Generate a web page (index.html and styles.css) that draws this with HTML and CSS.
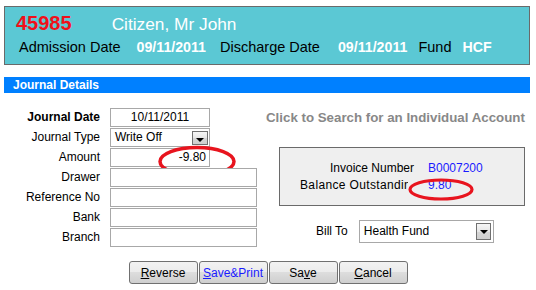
FILE: index.html
```html
<!DOCTYPE html>
<html>
<head>
<meta charset="utf-8">
<link rel="stylesheet" href="styles.css">
</head>
<body>
<div class="page">
  <div class="header">
    <div class="hrow1"><span class="mrn">45985</span><span class="pname">Citizen, Mr John</span></div>
    <div class="hrow2">
      <span class="hl">Admission Date</span><span class="hv">09/11/2011</span>
      <span class="hl">Discharge Date</span><span class="hv">09/11/2011</span>
      <span class="hl">Fund</span><span class="hv">HCF</span>
    </div>
  </div>
  <div class="bar">Journal Details</div>
  <div class="main">
    <div class="form">
      <div class="lbl bold">Journal Date</div>
      <div class="field w100 center">10/11/2011</div>
      <div class="lbl">Journal Type</div>
      <div class="field w100 select"><span>Write Off</span><span class="arrow small"></span></div>
      <div class="lbl">Amount</div>
      <div class="field w100 right amount">-9.80<svg class="oval oval-amt" width="80" height="33" viewBox="0 0 80 33"><ellipse cx="40" cy="16.5" rx="37" ry="14" fill="none" stroke="#e8141e" stroke-width="3.5"/></svg></div>
      <div class="lbl">Drawer</div>
      <div class="field"></div>
      <div class="lbl">Reference No</div>
      <div class="field"></div>
      <div class="lbl">Bank</div>
      <div class="field"></div>
      <div class="lbl">Branch</div>
      <div class="field"></div>
    </div>
    <div class="side">
      <div class="search">Click to Search for an Individual Account</div>
      <div class="invbox">
        <div class="ilbl">Invoice Number</div>
        <div class="ival">B0007200</div>
        <div class="ilbl bal-lbl"><span class="clip">Balance Outstanding</span></div>
        <div class="ival bal">9.80<svg class="oval oval-bal" width="68" height="25" viewBox="0 0 68 25"><ellipse cx="34" cy="12.5" rx="31" ry="9.5" fill="none" stroke="#e8141e" stroke-width="3.2"/></svg></div>
      </div>
      <div class="billto">
        <span class="billlbl">Bill To</span>
        <div class="field select big"><span>Health Fund</span><span class="arrow"></span></div>
      </div>
    </div>
  </div>
  <div class="buttons">
    <button class="btn"><u>R</u>everse</button>
    <button class="btn link"><u>S</u>ave&amp;Print</button>
    <button class="btn">Sa<u>v</u>e</button>
    <button class="btn"><u>C</u>ancel</button>
  </div>
</div>
</body>
</html>
```
FILE: styles.css
```css
* { box-sizing: border-box; }
html, body { margin: 0; padding: 0; background: #fff; }
body { font-family: "Liberation Sans", Arial, sans-serif; font-size: 12px; color: #000; }
.page { width: 536px; height: 290px; padding-top: 6px; overflow: hidden; }

.header {
  margin: 0 6px 0 4px;
  height: 59px;
  border: 1px solid #6a6a6a;
  background: #5bc8d4;
  padding: 4px 0 0 11px;
}
.hrow1 { display: flex; align-items: baseline; height: 24px; line-height: 24px; }
.mrn { color: #f0101a; font-weight: bold; font-size: 20px; }
.pname { color: #fff; font-size: 17.3px; margin-left: 40px; }
.hrow2 { display: flex; align-items: baseline; margin-top: 3px; line-height: 18px; padding-left: 3px; }
.hl { font-size: 14.5px; color: #000; }
.hv { font-size: 14.2px; font-weight: bold; color: #fff; }
.hrow2 .hl { margin-right: 16px; }
.hrow2 .hv { margin-right: 14px; }
.hrow2 .hl:nth-child(3) { margin-right: 18px; }
.hrow2 .hv:nth-child(4) { margin-right: 11px; }
.hrow2 .hl:nth-child(5) { margin-right: 11px; }

.bar {
  margin: 12px 6px 0 4px;
  height: 16px;
  line-height: 16px;
  background: #0080ff;
  color: #fff;
  font-weight: bold;
  font-size: 12px;
  padding-left: 9px;
}

.main { display: flex; align-items: flex-start; margin-top: 15px; }
.form {
  display: grid;
  grid-template-columns: 100px 147px;
  grid-auto-rows: 19px;
  column-gap: 10px;
  row-gap: 1px;
}
.lbl { text-align: right; line-height: 19px; white-space: nowrap; }
.bold { font-weight: bold; }
.field {
  position: relative;
  border: 1px solid #a8a8a8;
  background: #fff;
  height: 19px;
  line-height: 17px;
  padding: 0 4px;
  white-space: nowrap;
}
.w100 { width: 100px; }
.center { text-align: center; }
.right { text-align: right; padding-right: 3px; }
.select { display: flex; align-items: center; justify-content: space-between; padding-right: 1px; }
.arrow {
  position: relative;
  width: 15px;
  height: 17px;
  border: 1px solid #707070;
  background: linear-gradient(#f6f6f6, #e6e6e6 50%, #d6d6d6 50%, #cfcfcf);
}
.arrow.small { width: 16px; height: 14px; margin-top: 1px; }
.arrow::after {
  content: "";
  position: absolute;
  left: 3px;
  top: 6px;
  border-left: 4px solid transparent;
  border-right: 4px solid transparent;
  border-top: 4px solid #000;
}
.arrow.small::after { left: 3px; top: 6px; }
.oval { position: absolute; pointer-events: none; overflow: visible; }
.oval-amt { left: 46px; top: -4px; }

.side { width: 259px; margin-left: 9px; }
.search { color: #888; font-weight: bold; font-size: 13.3px; line-height: 19px; white-space: nowrap; }
.invbox {
  margin: 20px 0 0 13px;
  height: 59px;
  border: 1px solid #6a6a6a;
  background: #efefef;
  padding-top: 12px;
  display: grid;
  grid-template-columns: 134px auto;
  grid-auto-rows: 17px;
  column-gap: 14px;
  line-height: 17px;
}
.ilbl { text-align: right; white-space: nowrap; }
.bal-lbl { text-align: left; padding-left: 20px; }
.bal-lbl .clip { display: inline-block; width: 108px; overflow: hidden; vertical-align: top; white-space: nowrap; letter-spacing: 0.35px; }
.ival { color: #1a1aff; position: relative; }
.oval-bal { left: -21px; top: 0px; }

.billto { display: flex; align-items: center; margin-top: 14px; padding-left: 50px; }
.billlbl { margin-right: 11px; line-height: 23px; }
.big { width: 135px; height: 23px; line-height: 21px; padding-right: 2px; }

.buttons { display: flex; justify-content: center; gap: 1px; margin-top: 14px; padding-left: 0; }
.btn {
  width: 69px;
  height: 23px;
  font-family: "Liberation Sans", Arial, sans-serif;
  font-size: 12px;
  color: #000;
  border: 1px solid #707070;
  border-radius: 3px;
  background: linear-gradient(#f2f2f2, #ebebeb 50%, #dddddd 50%, #cfcfcf);
  padding: 0;
}
.btn.link { color: #1a1aff; }
```
